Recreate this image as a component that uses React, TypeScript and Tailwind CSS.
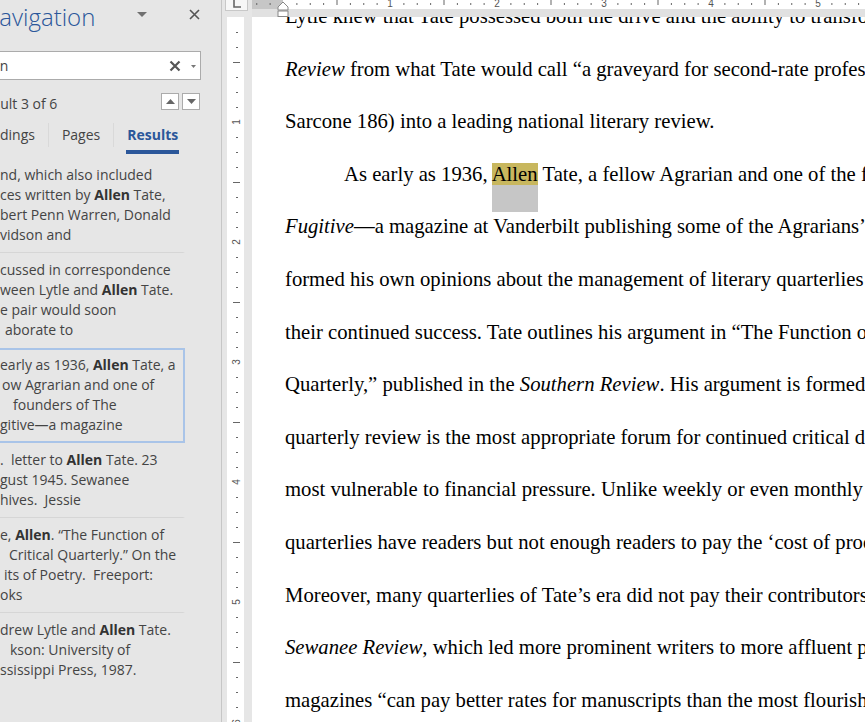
import React from 'react';

type Line = { t: React.ReactNode; pad?: string };
type Result = { lines: Line[]; sep?: boolean; active?: boolean };

const results: Result[] = [
  {
    sep: true,
    lines: [
      { t: 'nd, which also included' },
      { t: <>ces written by <b className="text-[#333]">Allen</b> Tate,</> },
      { t: 'bert Penn Warren, Donald' },
      { t: 'vidson and' },
    ],
  },
  {
    lines: [
      { t: 'cussed in correspondence' },
      { t: <>ween Lytle and <b className="text-[#333]">Allen</b> Tate.</> },
      { t: 'e pair would soon' },
      { t: 'aborate to', pad: 'pl-[5px]' },
    ],
  },
  {
    active: true,
    lines: [
      { t: <>early as 1936, <b className="text-[#333]">Allen</b> Tate, a</> },
      { t: 'ow Agrarian and one of', pad: 'pl-[2px]' },
      { t: 'founders of The', pad: 'pl-[13px]' },
      { t: 'gitive—a magazine' },
    ],
  },
  {
    sep: true,
    lines: [
      { t: <>.  letter to <b className="text-[#333]">Allen</b> Tate. 23</> },
      { t: 'gust 1945. Sewanee' },
      { t: 'hives.  Jessie' },
    ],
  },
  {
    sep: true,
    lines: [
      { t: <>e, <b className="text-[#333]">Allen</b>. “The Function of</> },
      { t: 'Critical Quarterly.” On the', pad: 'pl-[9px]' },
      { t: 'its of Poetry.  Freeport:', pad: 'pl-[4px]' },
      { t: 'oks' },
    ],
  },
  {
    lines: [
      { t: <>drew Lytle and <b className="text-[#333]">Allen</b> Tate.</> },
      { t: 'kson: University of', pad: 'pl-[10px]' },
      { t: 'ssissippi Press, 1987.' },
    ],
  },
];

const docLines: { t: React.ReactNode; indent?: boolean }[] = [
  { t: 'Lytle knew that Tate possessed both the drive and the ability to transform the Sewanee' },
  { t: <><i>Review</i> from what Tate would call “a graveyard for second-rate professors” (qtd. in</> },
  { t: 'Sarcone 186) into a leading national literary review.' },
  {
    indent: true,
    t: (
      <>
        As early as 1936,{' '}
        <span className="relative bg-[#c8b75e]">
          Allen
          <span className="absolute left-0 right-0 top-full h-[27px] bg-[#c6c6c6]" />
        </span>{' '}
        Tate, a fellow Agrarian and one of the founders of The
      </>
    ),
  },
  { t: <><i>Fugitive</i>—a magazine at Vanderbilt publishing some of the Agrarians’ early poetry—had</> },
  { t: 'formed his own opinions about the management of literary quarterlies and the keys to' },
  { t: 'their continued success. Tate outlines his argument in “The Function of the Critical' },
  { t: <>Quarterly,” published in the <i>Southern Review</i>. His argument is formed around the idea</> },
  { t: 'quarterly review is the most appropriate forum for continued critical discourse, yet it is' },
  { t: 'most vulnerable to financial pressure. Unlike weekly or even monthly magazines, the' },
  { t: 'quarterlies have readers but not enough readers to pay the ‘cost of production’ (Tate' },
  { t: 'Moreover, many quarterlies of Tate’s era did not pay their contributors, unlike the' },
  { t: <><i>Sewanee Review</i>, which led more prominent writers to more affluent publications.</> },
  { t: 'magazines “can pay better rates for manuscripts than the most flourishing quarterly”' },
];

const INCH_H = 107;
const MARGIN_X = 31;

const HRuler = () => {
  const step = INCH_H / 8;
  const ticks = [];
  for (let i = -2; i <= 46; i++) {
    if (i === 0) continue;
    const x = MARGIN_X + i * step;
    if (i > 0 && i % 8 === 0) {
      ticks.push(
        <text key={i} x={x} y={6.5} fontSize={10} textAnchor="middle" fill="#555" fontFamily="Liberation Sans, sans-serif">
          {i / 8}
        </text>
      );
    } else if (Math.abs(i) % 4 === 0) {
      ticks.push(<rect key={i} x={x} y={0} width={1} height={5} fill="#666" />);
    } else {
      ticks.push(<rect key={i} x={x} y={3} width={1} height={2} fill="#666" />);
    }
  }
  return (
    <svg width={613} height={17} className="block shrink-0">
      <rect x={0} y={0} width={613} height={17} fill="#e1e1e1" />
      <rect x={0} y={0} width={MARGIN_X} height={9} fill="#c6c6c6" />
      <rect x={MARGIN_X} y={0} width={613 - MARGIN_X} height={9} fill="#fff" />
      {ticks}
      <path d="M31 2 L36 7 L36 10 L26 10 L26 7 Z" fill="#fff" stroke="#888" strokeWidth={1} />
      <rect x={26} y={11} width={10} height={5.5} fill="#fff" stroke="#888" strokeWidth={1} />
    </svg>
  );
};

const VRuler = () => {
  const ticks = [];
  for (let k = 2; k <= 48; k++) {
    const y = 2 + k * 15 - 17;
    if (k % 8 === 0) {
      ticks.push(
        <text
          key={k}
          transform={`translate(9.5 ${y}) rotate(-90)`}
          fontSize={10}
          textAnchor="middle"
          dominantBaseline="central"
          fill="#555"
          fontFamily="Liberation Sans, sans-serif"
        >
          {k / 8}
        </text>
      );
    } else if (k % 4 === 0) {
      ticks.push(<rect key={k} x={6} y={y} width={7} height={1} fill="#666" />);
    } else {
      ticks.push(<rect key={k} x={9} y={y} width={2} height={1} fill="#666" />);
    }
  }
  return (
    <svg width={17} height={705} className="block">
      <rect x={0} y={0} width={17} height={705} fill="#fff" />
      {ticks}
    </svg>
  );
};

const NavPane = () => (
  <div className="w-[222px] shrink-0 h-full bg-[#e6e6e6] border-r border-[#c6c6c6] overflow-hidden font-['Open_Sans',sans-serif] text-[#444]">
    <div className="flex items-start h-[51px] pr-[21px]">
      <div className="-ml-[18px] mt-[1px] text-[24px] leading-[32px] font-light text-[#2b579a]">Navigation</div>
      <svg className="ml-auto mt-[12px]" width={10} height={6}>
        <path d="M0 0 L10 0 L5 5 Z" fill="#707070" />
      </svg>
      <svg className="ml-[42px] mt-[9px]" width={11} height={11}>
        <path d="M1 1 L10 10 M10 1 L1 10" stroke="#555" strokeWidth={1.6} />
      </svg>
    </div>

    <div className="-ml-[30px] w-[231px] h-[29px] bg-white border border-[#ababab] flex items-center pl-[5px] pr-[4px]">
      <span className="text-[14px] leading-[20px]">Allen</span>
      <svg className="ml-auto" width={12} height={12}>
        <path d="M1.5 1.5 L10.5 10.5 M10.5 1.5 L1.5 10.5" stroke="#555" strokeWidth={2.2} />
      </svg>
      <svg className="ml-[10px] mt-[2px]" width={5} height={3}>
        <path d="M0 0 L5 0 L2.5 3 Z" fill="#777" />
      </svg>
    </div>

    <div className="mt-[13px] h-[17px] flex items-center pr-[21px] -ml-[23px]">
      <span className="text-[14px] leading-[20px] mt-[4px]">Result 3 of 6</span>
      <div className="ml-auto flex gap-[3px]">
        <div className="w-[18px] h-[17px] bg-white border border-[#ababab] flex items-center justify-center">
          <svg width={9} height={5}>
            <path d="M0 5 L9 5 L4.5 0 Z" fill="#666" />
          </svg>
        </div>
        <div className="w-[18px] h-[17px] bg-white border border-[#ababab] flex items-center justify-center">
          <svg width={9} height={5}>
            <path d="M0 0 L9 0 L4.5 5 Z" fill="#666" />
          </svg>
        </div>
      </div>
    </div>

    <div className="mt-[15px] flex items-start -ml-[39px] text-[14px] leading-[20px]">
      <div className="px-[12px]">
        <div className="px-[1px] pb-[5px] border-b-[4px] border-transparent">Headings</div>
      </div>
      <div className="w-px h-[24px] -mt-[2px] bg-[#d9d9d9]" />
      <div className="px-[12px]">
        <div className="px-[1px] pb-[5px] border-b-[4px] border-transparent">Pages</div>
      </div>
      <div className="w-px h-[24px] -mt-[2px] bg-[#d9d9d9]" />
      <div className="px-[12px]">
        <div className="px-[1px] pb-[5px] border-b-[4px] border-[#2b579a] font-bold text-[#2b579a]">Results</div>
      </div>
    </div>

    <div className="mt-[4px] -ml-[10px] w-[195px] text-[14px] leading-[20px]">
      {results.map((r, i) => (
        <div
          key={i}
          className={
            r.active
              ? 'border-2 border-[#a9c4e8] pl-[8px] pt-[5px] pb-[6px]'
              : r.sep
              ? 'border-x-2 border-t-2 border-transparent border-b border-b-[#d6d6d6] pl-[8px] pt-[5px] pb-[7px]'
              : 'border-2 border-transparent pl-[8px] pt-[5px] pb-[6px]'
          }
        >
          {r.lines.map((l, j) => (
            <div key={j} className={`whitespace-pre ${l.pad ?? ''}`}>
              {l.t}
            </div>
          ))}
        </div>
      ))}
    </div>
  </div>
);

const App = () => {
  return (
    <div className="w-[865px] h-[722px] flex overflow-hidden bg-[#e6e6e6]">
      <NavPane />
      <div className="flex-1 flex flex-col min-w-0">
        <div className="flex h-[17px] shrink-0">
          <div className="w-[30px] shrink-0 pl-[3px]">
            <div className="w-[23px] h-[11px] bg-[#f7f7f7] border border-t-0 border-[#c8c8c8]">
              <svg width={21} height={10} className="block">
                <path d="M8 0 L8 7 L15 7" stroke="#666" strokeWidth={1.6} fill="none" />
              </svg>
            </div>
          </div>
          <HRuler />
        </div>
        <div className="flex flex-1 min-h-0">
          <div className="w-[30px] shrink-0 pl-[5px]">
            <VRuler />
          </div>
          <div className="flex-1 bg-white overflow-hidden pl-[33px] font-['Liberation_Serif',serif] text-[20.7px] text-black">
            <div className="-mt-[27px]">
              {docLines.map((l, i) => (
                <div key={i} className={`whitespace-nowrap leading-[52.6px] ${l.indent ? 'pl-[59px]' : ''}`}>
                  {l.t}
                </div>
              ))}
            </div>
          </div>
        </div>
      </div>
    </div>
  );
};

export default App;
